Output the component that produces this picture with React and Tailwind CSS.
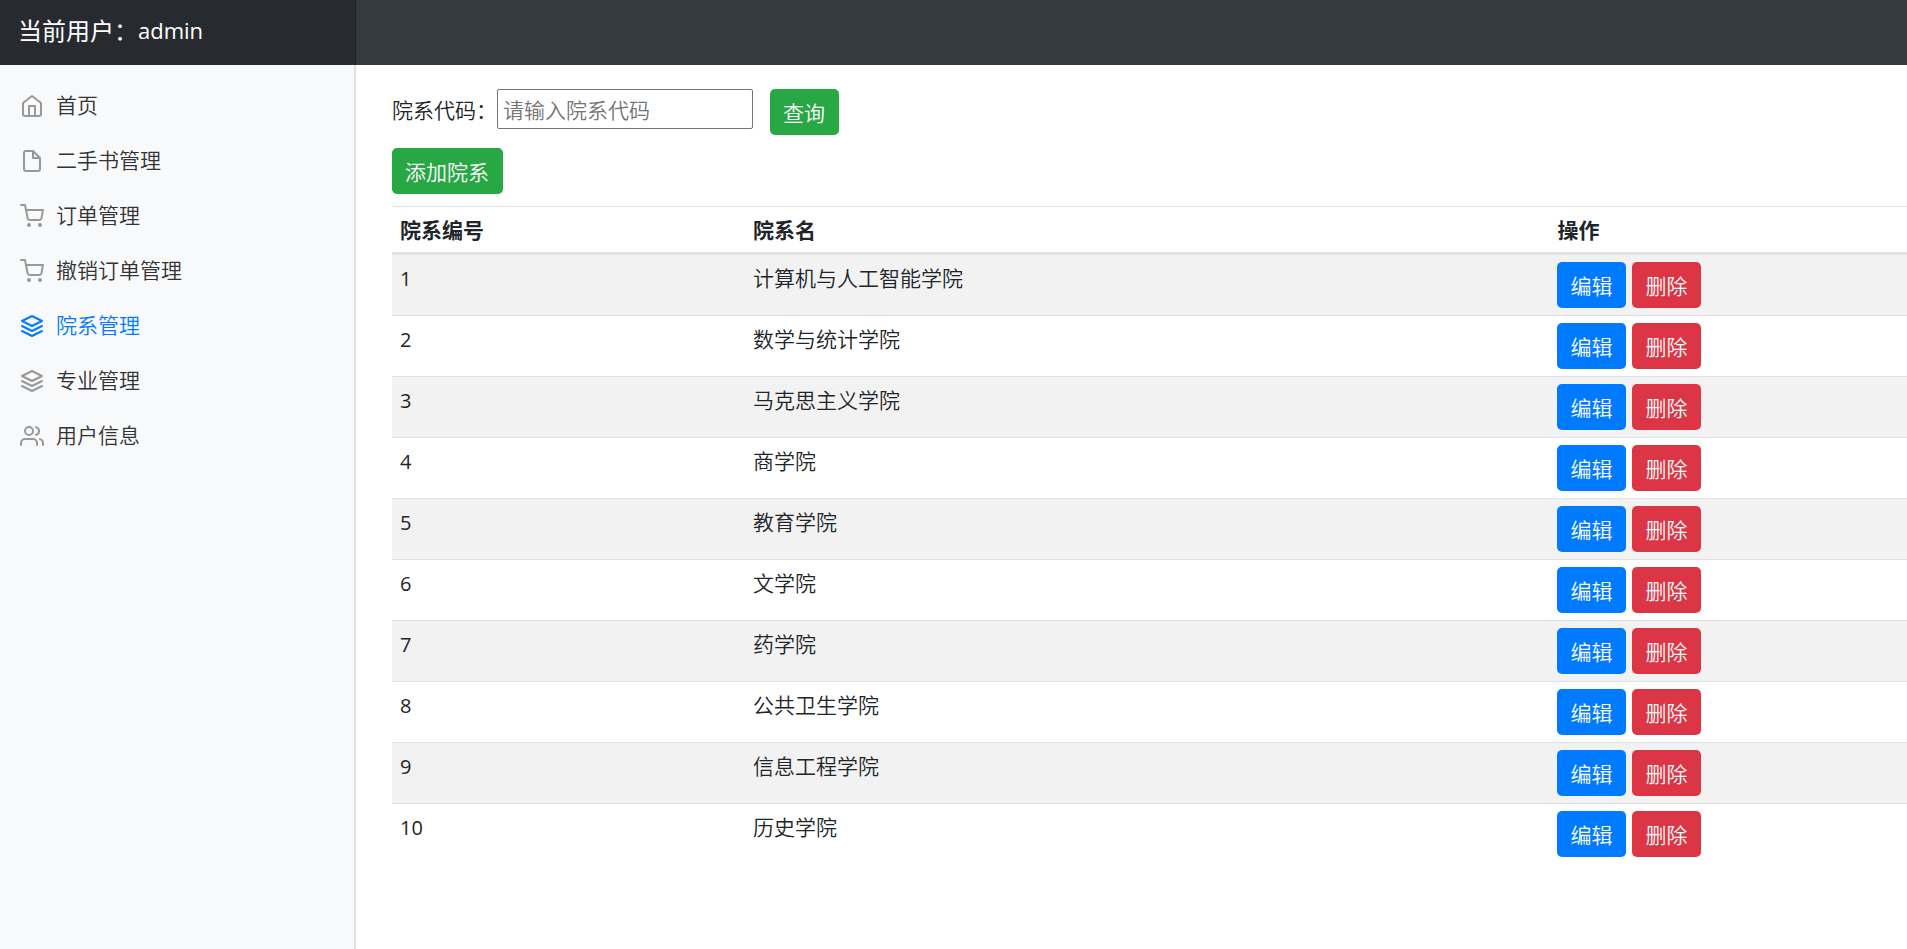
import React, { useState } from 'react';
import { FiFile, FiHome, FiLayers, FiShoppingCart, FiUsers } from 'react-icons/fi';

const menus = [
  { name: '首页', icon: FiHome },
  { name: '二手书管理', icon: FiFile },
  { name: '订单管理', icon: FiShoppingCart },
  { name: '撤销订单管理', icon: FiShoppingCart },
  { name: '院系管理', icon: FiLayers, active: true },
  { name: '专业管理', icon: FiLayers },
  { name: '用户信息', icon: FiUsers },
];

const departments = [
  { id: 1, name: '计算机与人工智能学院' },
  { id: 2, name: '数学与统计学院' },
  { id: 3, name: '马克思主义学院' },
  { id: 4, name: '商学院' },
  { id: 5, name: '教育学院' },
  { id: 6, name: '文学院' },
  { id: 7, name: '药学院' },
  { id: 8, name: '公共卫生学院' },
  { id: 9, name: '信息工程学院' },
  { id: 10, name: '历史学院' },
];

// 按钮
function Button({ color, children, ...rest }) {
  return (
    <button
      type="button"
      className={`h-[46px] rounded-[5px] pt-[2px] pl-[13px] pr-[14px] text-white ${color}`}
      {...rest}
    >
      {children}
    </button>
  );
}

// 顶部导航
function Navbar() {
  return (
    <header className="flex h-[65px] bg-[#343a40] text-white">
      <a
        href="#"
        className="flex w-[356px] items-center pb-1 pl-[18px] text-2xl bg-[#272b30] shadow-[inset_-1px_0_0_rgba(0,0,0,0.25)]"
      >
        当前用户：<span className="text-[22px]">admin</span>
      </a>
    </header>
  );
}

// 左侧菜单
function Sidebar() {
  return (
    <nav className="w-[356px] shrink-0 bg-[#f8f9fa] pt-[13px] shadow-[inset_-2px_0_0_rgba(0,0,0,0.1)]">
      <ul>
        {menus.map(({ name, icon: Icon, active }) => (
          <li key={name}>
            <a
              href="#"
              className={`flex h-[55px] items-center gap-3 pl-5 font-[350] ${active ? 'text-[#007bff]' : 'text-[#333]'}`}
            >
              <Icon size={24} className={active ? 'text-[#007bff]' : 'text-[#999]'} />
              <span className="pb-[2px]">{name}</span>
            </a>
          </li>
        ))}
      </ul>
    </nav>
  );
}

export default function App() {
  const [code, setCode] = useState('');

  return (
    <div className="flex min-h-screen flex-col bg-white text-[21px] leading-8 text-[#212529] font-['Open_Sans','Noto_Sans_CJK_SC',sans-serif]">
      <Navbar />
      <div className="flex flex-1">
        <Sidebar />
        <main className="flex-1 pt-6 pl-9 font-[350]">
          {/* 查询 */}
          <form className="flex items-start" onSubmit={(e) => e.preventDefault()}>
            <label htmlFor="code" className="pt-[5px]">院系代码：</label>
            <input
              id="code"
              type="text"
              value={code}
              onChange={(e) => setCode(e.target.value)}
              placeholder="请输入院系代码"
              className="mr-[17px] h-10 w-64 rounded-[2px] border border-[#767676] bg-white px-[5px] pt-[2px] placeholder:text-[#757575]"
            />
            <Button color="bg-[#28a745]">查询</Button>
          </form>
          <div className="mt-[13px] mb-3 flex">
            <Button color="bg-[#28a745]">添加院系</Button>
          </div>

          {/* 院系列表 */}
          <table className="w-full table-fixed border-separate border-spacing-0 text-left">
            <thead>
              <tr className="*:h-[49px] *:border-t *:border-b-3 *:border-[#dee2e6] *:px-2 *:font-bold">
                <th className="w-[23.3%]">院系编号</th>
                <th className="w-[53.1%]">院系名</th>
                <th>操作</th>
              </tr>
            </thead>
            <tbody>
              {departments.map((d, i) => (
                <tr
                  key={d.id}
                  className={`*:border-[#dee2e6] *:px-2 *:py-[7px] *:align-top odd:bg-[#f2f2f2] ${i > 0 ? '*:border-t' : ''}`}
                >
                  <td className="text-xl leading-[34px] font-normal">{d.id}</td>
                  <td>{d.name}</td>
                  <td>
                    <div className="flex gap-[6px]">
                      <Button color="bg-[#007bff]">编辑</Button>
                      <Button color="bg-[#dc3545]">删除</Button>
                    </div>
                  </td>
                </tr>
              ))}
            </tbody>
          </table>
        </main>
      </div>
    </div>
  );
}
